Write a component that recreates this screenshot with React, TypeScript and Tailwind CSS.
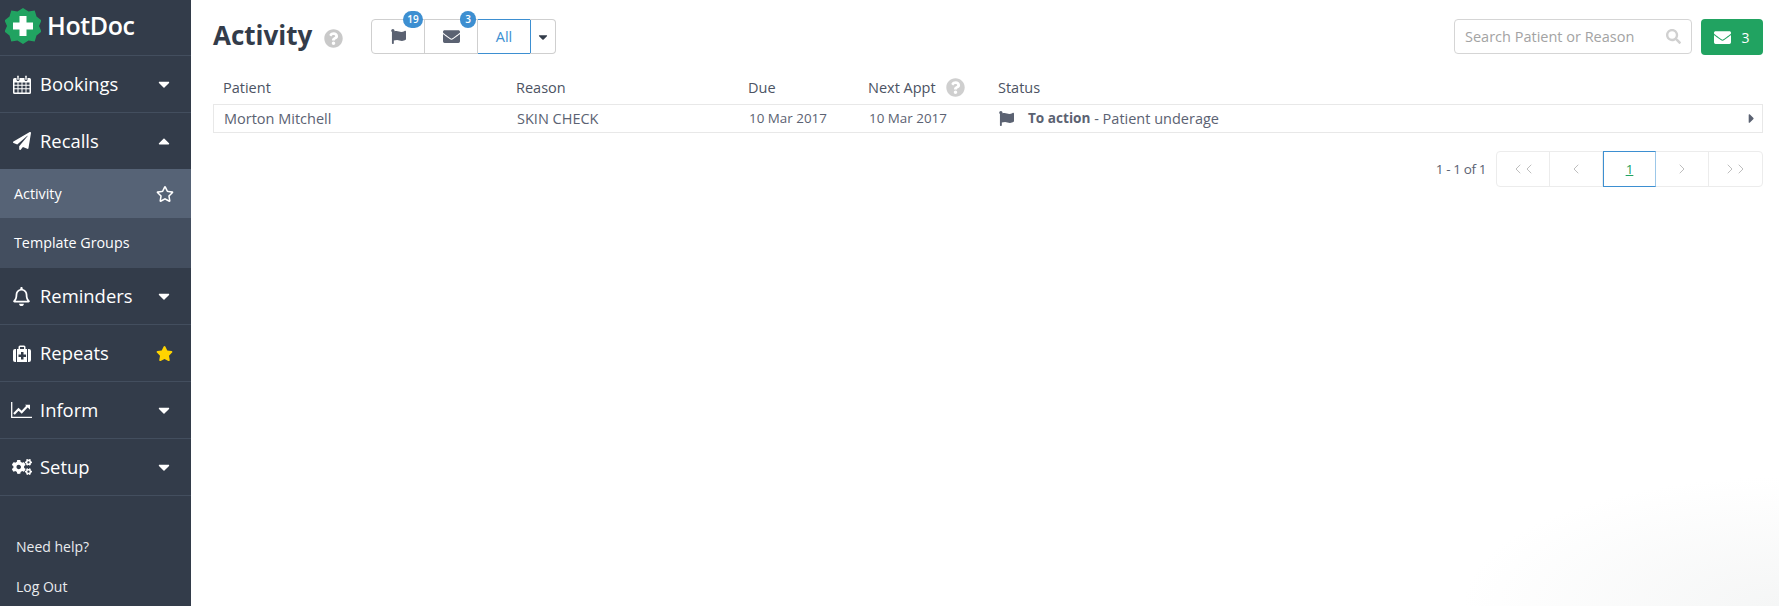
import { ReactNode } from 'react';
import {
  FaCaretDown,
  FaCaretRight,
  FaCaretUp,
  FaCogs,
  FaEnvelope,
  FaFlag,
  FaPaperPlane,
  FaQuestionCircle,
  FaRegBell,
  FaRegStar,
  FaSearch,
  FaStar,
} from 'react-icons/fa';
import { ChevronLeft, ChevronRight } from 'lucide-react';

function Logo() {
  return (
    <svg width="36" height="36" viewBox="0 0 36 36">
      <path
        d="M18 0l5.500 3.400 6.200-.9 1.800 6 5 3.900L34 18l2.500 5.600-5 3.900-1.800 6-6.200-.9L18 36l-5.500-3.400-6.200.9-1.800-6-5-3.900L2 18-.5 12.400l5-3.900 1.800-6 6.200.9z"
        fill="#21a361"
      />
      <path d="M14.500 8h7v6.500H28v7h-6.500V28h-7v-6.500H8v-7h6.500z" fill="#fff" />
    </svg>
  );
}

function CalendarIcon() {
  return (
    <svg width="18" height="19" viewBox="0 0 18 19" fill="#fff">
      <path
        fillRule="evenodd"
        d="M1.500 3H3.500V4.500a1.500 1.500 0 003 0V3h5V4.500a1.500 1.500 0 003 0V3h2A1.500 1.500 0 0118 4.500v13a1.500 1.500 0 01-1.500 1.500h-15A1.500 1.500 0 010 17.500v-13A1.500 1.500 0 011.500 3zM1.500 7.500v2.300h3V7.500zM5.500 7.500v2.300h3V7.500zM9.500 7.500v2.300h3V7.500zM13.500 7.500v2.300h3V7.500zM1.500 10.800v2.500h3v-2.500zM5.500 10.800v2.500h3v-2.500zM9.500 10.800v2.500h3v-2.500zM13.500 10.800v2.500h3v-2.500zM1.500 14.300v3.200h3v-3.200zM5.500 14.300v3.200h3v-3.200zM9.500 14.300v3.200h3v-3.200zM13.500 14.300v3.200h3v-3.200z"
      />
      <rect x="4.300" y="0.500" width="1.400" height="4.500" rx="0.700" />
      <rect x="12.300" y="0.500" width="1.400" height="4.500" rx="0.700" />
    </svg>
  );
}

// FA4 medkit: handle on top, body split into three blocks, plus in the middle
function MedkitIcon() {
  return (
    <svg width="18" height="17" viewBox="0 0 18 17" fill="#fff">
      <path d="M5.500 4V2A1.500 1.500 0 017 .5h4A1.500 1.500 0 0112.500 2v2H11V2H7v2z" />
      <path d="M0 6a2 2 0 012-2h1v13H2a2 2 0 01-2-2zM18 6a2 2 0 00-2-2h-1v13h1a2 2 0 002-2z" />
      <path
        fillRule="evenodd"
        d="M4 4h10v13H4zM8 7v2.500H5.500v2.500H8v2.500h2.500V12H13V9.500h-2.500V7z"
      />
    </svg>
  );
}

function ChartIcon() {
  return (
    <svg width="21" height="16" viewBox="0 0 21 16" fill="none" stroke="#fff">
      <path d="M.7 0v15.300H21" strokeWidth="1.300" />
      <path d="M3 12l4.500-4.800 3.200 3 5.800-6.200" strokeWidth="2.200" />
      <path d="M14 2.700h5v5z" fill="#fff" stroke="none" />
    </svg>
  );
}

function NavItem({ icon, label, right }: { icon: ReactNode; label: string; right: ReactNode }) {
  return (
    <div className="flex h-[57px] items-center border-b border-[#434e5e] text-white">
      <div className="flex w-[40px] justify-center pl-[3px] text-[18px]">{icon}</div>
      <span className="text-[18.400px]">{label}</span>
      <div className="ml-auto mr-[15px] flex w-[24px] justify-center">{right}</div>
    </div>
  );
}

const caret = <FaCaretDown className="text-[18px]" />;

function Sidebar() {
  return (
    <aside className="flex h-full w-[191px] shrink-0 flex-col bg-[#333c4a]">
      <div className="flex h-[56px] items-center gap-[6px] border-b border-[#434e5e] pb-[3px] pl-[5px] text-white">
        <Logo />
        <span className="text-[25px] font-semibold tracking-[-0.4px]">HotDoc</span>
      </div>
      <NavItem icon={<CalendarIcon />} label="Bookings" right={caret} />
      <div className="flex h-[56px] items-center text-white">
        <div className="flex w-[40px] justify-center pl-[3px] text-[18px]">
          <FaPaperPlane />
        </div>
        <span className="text-[18.400px]">Recalls</span>
        <div className="ml-auto mr-[15px] flex w-[24px] justify-center">
          <FaCaretUp className="text-[18px]" />
        </div>
      </div>
      <div className="flex h-[49px] items-center justify-between bg-[#566376] pl-[14px] pr-[17px] text-[14.300px] text-white">
        <span>Activity</span>
        <FaRegStar className="text-[18px]" />
      </div>
      <div className="flex h-[50px] items-center bg-[#434e5f] pb-px pl-[14px] text-[14.300px] text-white">
        Template Groups
      </div>
      <NavItem icon={<FaRegBell className="text-[19px]" />} label="Reminders" right={caret} />
      <NavItem icon={<MedkitIcon />} label="Repeats" right={<FaStar className="text-[17px] text-[#ffd400]" />} />
      <NavItem icon={<ChartIcon />} label="Inform" right={caret} />
      <NavItem icon={<FaCogs className="text-[20px]" />} label="Setup" right={caret} />
      <div className="flex flex-col gap-[19px] pl-[16px] pt-[40px] text-[14px] text-[#e9ebee]">
        <span>Need help?</span>
        <span>Log Out</span>
      </div>
    </aside>
  );
}

function Badge({ children, className }: { children: ReactNode; className: string }) {
  return (
    <span
      className={`absolute -top-[9px] flex h-[17px] items-center justify-center rounded-full bg-[#3d8fd1] text-[10px] font-semibold text-white ${className}`}
    >
      {children}
    </span>
  );
}

function TopBar() {
  return (
    <div className="flex h-[73px] items-start pt-[19px]">
      <h1 className="-mt-[1px] w-[100px] text-[26px] leading-[35px] font-bold text-[#333c4a]">Activity</h1>
      <FaQuestionCircle className="ml-[11px] mt-[10px] text-[19px] text-[#c9c9c9]" />
      <div className="ml-[28px] flex h-[35px] text-[#5b6272]">
        <div className="relative flex w-[54px] items-center justify-center rounded-l-[4px] border border-[#cfcfcf]">
          <FaFlag className="text-[15px]" />
          <Badge className="left-[31px] w-[20px]">19</Badge>
        </div>
        <div className="relative -ml-px flex w-[54px] items-center justify-center border border-[#cfcfcf]">
          <FaEnvelope className="text-[17px]" />
          <Badge className="left-[35px] w-[16px]">3</Badge>
        </div>
        <div className="-ml-px flex w-[54px] items-center justify-center border border-[#3d8fd1] text-[14.500px] text-[#3d8fd1]">
          All
        </div>
        <div className="-ml-px flex w-[26px] items-center justify-center rounded-r-[4px] border border-l-0 border-[#cfcfcf] text-[#333c4a]">
          <FaCaretDown className="text-[14px]" />
        </div>
      </div>
      <div className="ml-auto flex h-[35px] w-[238px] items-center justify-between rounded-[4px] border border-[#d5d5d5] pl-[10px] pr-[10px] text-[14.500px] text-[#a3a3a3]">
        <span>Search Patient or Reason</span>
        <FaSearch className="text-[15px] text-[#d0d0d0]" />
      </div>
      <div className="ml-[9px] flex h-[36px] w-[62px] items-center justify-center gap-[10px] rounded-[4px] bg-[#21a361] text-[14px] text-white">
        <FaEnvelope className="text-[17px]" />
        <span>3</span>
      </div>
    </div>
  );
}

const gridCols = 'grid grid-cols-[293px_232px_120px_130px_1fr] items-center';

function ActivityTable() {
  return (
    <div className="text-[14.500px] text-[#5b6272]">
      <div className={`${gridCols} h-[31px] pb-[2px] pl-[10px] text-[#4c5363]`}>
        <span>Patient</span>
        <span>Reason</span>
        <span>Due</span>
        <span className="flex items-center gap-[10px]">
          Next Appt <FaQuestionCircle className="text-[19px] text-[#cfcfcf]" />
        </span>
        <span>Status</span>
      </div>
      <div className={`${gridCols} relative h-[29px] border border-[#e8e8e8] pl-[10px]`}>
        <span>Morton Mitchell</span>
        <span>SKIN CHECK</span>
        <span className="text-[13.400px]">10 Mar 2017</span>
        <span className="text-[13.400px]">10 Mar 2017</span>
        <span className="flex items-center">
          <FaFlag className="mr-[14px] text-[15px]" />
          <b className="text-[13.600px] font-bold">To action</b>&nbsp;- Patient underage
        </span>
        <FaCaretRight className="absolute right-[3px] top-[6px] text-[15px]" />
      </div>
    </div>
  );
}

function Pagination() {
  const cell = 'flex w-[53px] items-center justify-center text-[#b4b4b4] border-r border-[#ececec]';
  const left = <ChevronLeft size={16} strokeWidth={1.300} />;
  const right = <ChevronRight size={16} strokeWidth={1.300} />;
  return (
    <div className="mt-[18px] flex items-center justify-end text-[13.500px] text-[#5b6272]">
      <span className="mr-[10px] tracking-[-0.4px]">1 - 1 of 1</span>
      <div className="flex h-[36px] rounded-[4px] border border-[#ececec]">
        <div className={`${cell} -space-x-[5px]`}>
          {left}
          {left}
        </div>
        <div className={cell}>{left}</div>
        <div className="-my-px flex w-[53px] items-center justify-center border border-[#3d8fd1] border-r-[#9cc7e8] text-[#21a361] underline">
          1
        </div>
        <div className={cell}>{right}</div>
        <div className="flex w-[53px] items-center justify-center -space-x-[5px] text-[#b4b4b4]">
          {right}
          {right}
        </div>
      </div>
    </div>
  );
}

export default function App() {
  return (
    <div className="flex h-screen overflow-hidden bg-white font-['Open_Sans',sans-serif]">
      <Sidebar />
      <main className="relative flex-1 pl-[22px] pr-[16px]">
        {/* faint wash in the bottom corner */}
        <div className="absolute bottom-0 right-0 h-[130px] w-[320px] bg-[radial-gradient(ellipse_at_bottom_right,#f5f6f6_0%,#ffffff_70%)]" />
        <div className="relative">
          <TopBar />
          <ActivityTable />
          <Pagination />
        </div>
      </main>
    </div>
  );
}
